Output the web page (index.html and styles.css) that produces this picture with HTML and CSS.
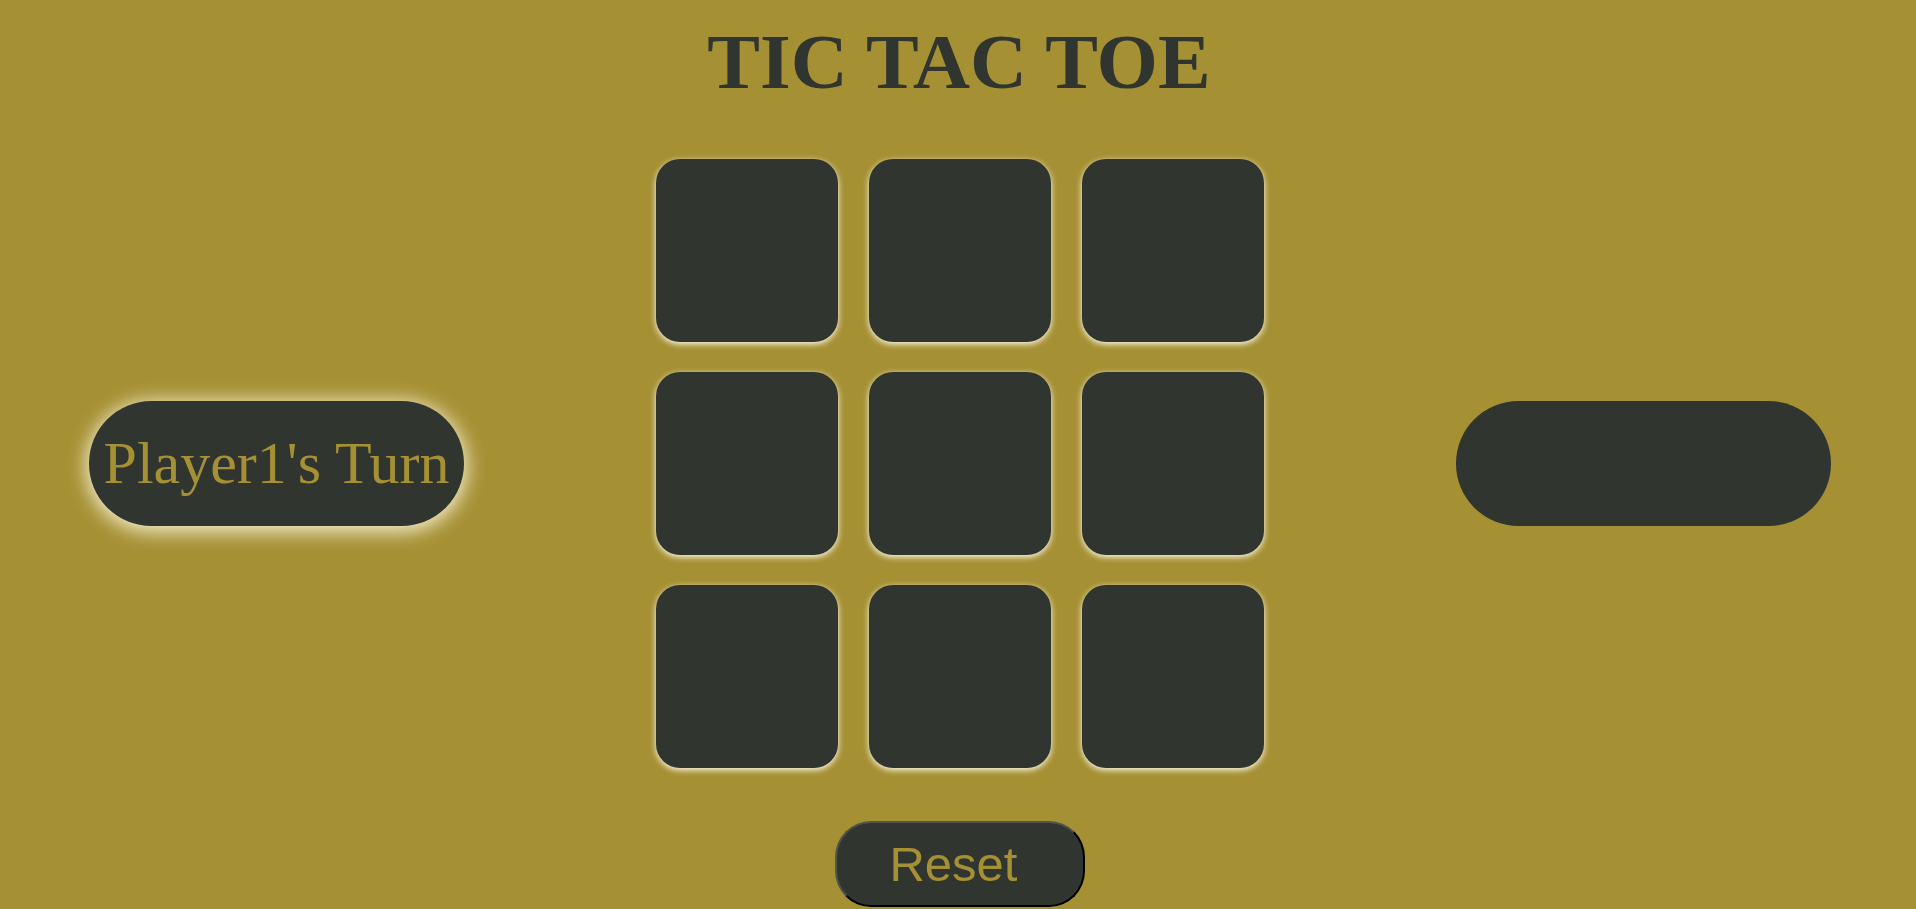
FILE: index.html
```html
<!DOCTYPE html>
<html>
<head>
<meta charset="utf-8">
<title>Tic Tac Toe</title>
<link rel="stylesheet" href="styles.css">
</head>
<body>
<h1 class="title">TIC TAC TOE</h1>
<main class="game">
  <div class="turn turn-active">Player1's Turn</div>
  <div class="board">
    <div class="cell"></div>
    <div class="cell"></div>
    <div class="cell"></div>
    <div class="cell"></div>
    <div class="cell"></div>
    <div class="cell"></div>
    <div class="cell"></div>
    <div class="cell"></div>
    <div class="cell"></div>
  </div>
  <div class="turn"></div>
</main>
<div class="actions">
  <button class="reset">Reset</button>
</div>
</body>
</html>
```
FILE: styles.css
```css
html, body {
  margin: 0;
  padding: 0;
}
body {
  background: #a69034;
  width: 1916px;
  height: 909px;
  overflow: hidden;
  font-family: "Liberation Serif", "Times New Roman", serif;
}
.title {
  margin: 17px 0 0;
  padding-left: 2px;
  text-align: center;
  font-size: 79px;
  font-weight: bold;
  line-height: 89px;
  color: #303530;
}
.game {
  display: flex;
  justify-content: center;
  align-items: center;
  gap: 192px;
  margin-top: 53px;
  padding-left: 4px;
}
.turn {
  width: 375px;
  height: 125px;
  border-radius: 63px;
  background: #303530;
  color: #a69034;
  font-size: 60px;
  display: flex;
  align-items: center;
  justify-content: center;
  box-sizing: border-box;
}
.turn-active {
  box-shadow: 0 3px 20px 2px rgba(255, 250, 225, 0.95);
}
.board {
  display: grid;
  grid-template-columns: repeat(3, 182px);
  grid-template-rows: repeat(3, 183px);
  column-gap: 31px;
  row-gap: 30px;
}
.cell {
  background: #303530;
  border-radius: 24px;
  box-shadow: 0 2px 6px rgba(255, 252, 235, 1);
}
.actions {
  display: flex;
  justify-content: center;
  margin-top: 53px;
}
.reset {
  width: 250px;
  height: 86px;
  box-sizing: border-box;
  border: 2px solid;
  border-color: #52554f #000 #000 #52554f;
  border-radius: 36px;
  background: #303530;
  color: #a69034;
  font-family: "Liberation Sans", Arial, sans-serif;
  font-size: 49px;
  padding: 0 12px 0 0;
  margin-left: 3px;
}
```
